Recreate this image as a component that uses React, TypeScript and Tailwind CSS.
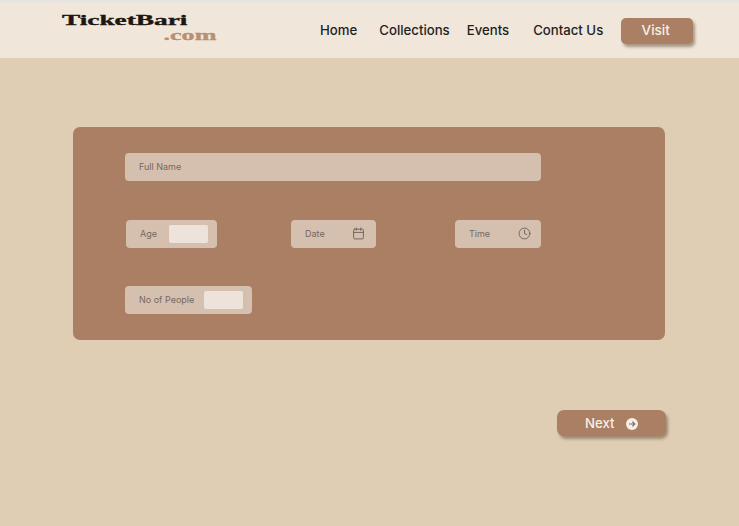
import { Clock, Calendar } from "lucide-react";

const navFont = "font-['Inter','Liberation_Sans',sans-serif]";

const fieldClass = "flex h-7 items-center rounded-[4px] bg-[#d5bfae] text-[9px] text-[#75695f]";
const shadowClass = "shadow-[2px_3px_3px_rgba(110,85,60,0.55)]";

function NavLink({ label, className }: { label: string; className: string }) {
  return (
    <a className={`whitespace-nowrap text-[13.2px] font-medium text-[#1f1f1f] ${className}`}>{label}</a>
  );
}

export default function App() {
  return (
    <div className={`flex min-h-[526px] w-full flex-col bg-[#dfcdb4] ${navFont}`}>
      <header className="flex h-[58px] items-center border-t-[3px] border-[#e8e4df] bg-[#f0e6da]">
        <div className="mb-[6px] ml-[62px] flex w-[154px] flex-col font-['Liberation_Serif',serif] font-bold leading-none">
          <span className="origin-left scale-x-[1.82] text-[15px] leading-[15px] text-[#1c1613] [-webkit-text-stroke:0.35px_#1c1613]">
            TicketBari
          </span>
          <span className="origin-right scale-x-[1.74] self-end text-[15px] leading-[15px] text-[#b98f72] [-webkit-text-stroke:0.35px_#b98f72]">
            .com
          </span>
        </div>
        <nav className="ml-[104px] flex items-center">
          <NavLink label="Home" className="" />
          <NavLink label="Collections" className="ml-[22px]" />
          <NavLink label="Events" className="ml-[17px]" />
          <NavLink label="Contact Us" className="ml-[24px]" />
        </nav>
        <button
          type="button"
          className={`ml-[18px] h-[26px] w-[72px] rounded-[5px] bg-[#aa7f63] pr-[3px] text-[13.5px] font-medium text-[#f7efe6] ${shadowClass}`}
        >
          Visit
        </button>
      </header>

      <main className="flex flex-col px-[73px] pt-[69px]">
        <section className="flex h-[213px] w-[592px] flex-col rounded-[7px] bg-[#aa7f63] pl-[52px] pt-[26px]">
          <div className={`${fieldClass} w-[416px] pl-[14px]`}>Full Name</div>

          <div className="mt-[39px] flex w-[416px] items-center">
            <div className={`${fieldClass} ml-px w-[91px] pl-[14px] pr-[9px]`}>
              Age
              <span className="ml-auto h-[18px] w-[39px] rounded-[2px] bg-[#eee3da]" />
            </div>
            <div className={`${fieldClass} ml-[74px] w-[85px] pl-[14px] pr-[11px]`}>
              Date
              <Calendar className="mb-px ml-auto size-[13px] text-[#5f5650]" strokeWidth={1.5} />
            </div>
            <div className={`${fieldClass} ml-auto w-[86px] pl-[14px] pr-[10px]`}>
              Time
              <Clock className="mb-px ml-auto size-[13px] text-[#5f5650]" strokeWidth={1.5} />
            </div>
          </div>

          <div className={`${fieldClass} mt-[38px] w-[127px] pl-[14px] pr-[9px]`}>
            No of People
            <span className="ml-auto h-[18px] w-[39px] rounded-[2px] bg-[#eee3da]" />
          </div>
        </section>

        <div className="mt-[70px] flex w-[593px] justify-end">
          <button
            type="button"
            className={`flex h-[26px] w-[109px] items-center rounded-[7px] bg-[#aa7f63] pl-[28px] text-[13.2px] font-medium text-[#f7efe6] ${shadowClass}`}
          >
            <span className="mt-px">Next</span>
            <span className="ml-[11px] mt-px flex size-[12px] items-center justify-center rounded-full bg-[#f7efe6]">
              <svg viewBox="0 0 12 12" className="size-[12px]" fill="none" stroke="#7a6a70" strokeWidth="1.2">
                <path d="M3 6h6M6.4 3.6 8.8 6 6.4 8.4" />
              </svg>
            </span>
          </button>
        </div>
      </main>
    </div>
  );
}
